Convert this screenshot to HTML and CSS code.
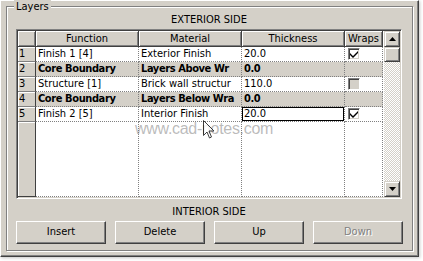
FILE: index.html
```html
<!DOCTYPE html>
<html>
<head>
<meta charset="utf-8">
<link rel="stylesheet" href="styles.css">
</head>
<body>
<div class="dialog">
  <div class="group">
    <div class="legend">Layers</div>
    <div class="side">EXTERIOR SIDE</div>
    <div class="grid">
      <div class="table">
        <div class="hc"></div>
        <div class="hc">Function</div>
        <div class="hc">Material</div>
        <div class="hc">Thickness</div>
        <div class="hc">Wraps</div>

        <div class="rh">1</div>
        <div class="c">Finish 1 [4]</div>
        <div class="c">Exterior Finish</div>
        <div class="c">20.0</div>
        <div class="c"><span class="cb"><svg width="8" height="7" viewBox="0 0 8 7"><path d="M0 2v2l3 3 5-5V0L3 5z" fill="#000"/></svg></span></div>

        <div class="rh">2</div>
        <div class="c g b">Core Boundary</div>
        <div class="c g b">Layers Above Wr</div>
        <div class="c g b">0.0</div>
        <div class="c g"></div>

        <div class="rh">3</div>
        <div class="c">Structure [1]</div>
        <div class="c">Brick wall structur</div>
        <div class="c">110.0</div>
        <div class="c"><span class="cb dis"></span></div>

        <div class="rh">4</div>
        <div class="c g b">Core Boundary</div>
        <div class="c g b">Layers Below Wra</div>
        <div class="c g b">0.0</div>
        <div class="c g"></div>

        <div class="rh">5</div>
        <div class="c">Finish 2 [5]</div>
        <div class="c">Interior Finish</div>
        <div class="c sel">20.0</div>
        <div class="c"><span class="cb"><svg width="8" height="7" viewBox="0 0 8 7"><path d="M0 2v2l3 3 5-5V0L3 5z" fill="#000"/></svg></span></div>

        <div class="rh fill"></div>
        <div class="c fill"></div>
        <div class="c fill"></div>
        <div class="c fill"></div>
        <div class="c fill"></div>
      </div>
      <div class="vscroll">
        <div class="sbtn"><svg width="7" height="4" viewBox="0 0 7 4"><path d="M3.5 0L7 4H0z" fill="#000"/></svg></div>
        <div class="thumb"></div>
        <div class="track"></div>
        <div class="sbtn"><svg width="7" height="4" viewBox="0 0 7 4"><path d="M0 0h7L3.5 4z" fill="#000"/></svg></div>
      </div>
      <div class="watermark">www.cad-notes.com</div>
      <svg class="cursor" width="12" height="20" viewBox="0 0 12 20"><path d="M0.5 0.5v15l3.5-3.5 2.5 6 2-1-2.5-6h5z" fill="#fff" stroke="#000" stroke-width="1"/></svg>
    </div>
    <div class="side side-int">INTERIOR SIDE</div>
    <div class="buttons">
      <div class="btn">Insert</div>
      <div class="btn">Delete</div>
      <div class="btn">Up</div>
      <div class="btn disabled">Down</div>
    </div>
  </div>
</div>
</body>
</html>
```

FILE: styles.css
```css
html, body {
  margin: 0;
  padding: 0;
}
body {
  width: 423px;
  height: 261px;
  background: #fff;
  font-family: "DejaVu Sans Condensed", "DejaVu Sans", sans-serif;
  font-size: 11px;
  color: #000;
  overflow: hidden;
}
.dialog {
  width: 419px;
  height: 257px;
  padding: 5px 0 0 5px;
  box-sizing: border-box;
  background: #d4d0c8;
  border-style: solid;
  border-width: 1px;
  border-color: #fff #404040 #404040 #fff;
  box-shadow: inset -1px -1px 0 #808080, 1px 1px 3px rgba(0, 0, 0, 0.22);
}
.group {
  position: relative;
  width: 407px;
  height: 245px;
  box-sizing: border-box;
  border: 1px solid #808080;
  box-shadow: inset 1px 1px 0 #fff, 1px 1px 0 #fff;
  padding: 6px 0 0 9px;
}
.legend {
  position: absolute;
  left: 7px;
  top: -7px;
  padding: 0 2px;
  background: #d4d0c8;
  line-height: 13px;
}
.side {
  width: 386px;
  text-align: center;
  line-height: 13px;
  height: 13px;
}
.side-int {
  margin-top: 6px;
}
.grid {
  position: relative;
  margin-top: 3px;
  width: 386px;
  height: 170px;
  box-sizing: border-box;
  border-style: solid;
  border-width: 1px;
  border-color: #808080 #fff #fff #808080;
  box-shadow: inset 1px 1px 0 #404040, inset -1px -1px 0 #d4d0c8;
  padding: 1px;
  display: flex;
  background: #fff;
}
.table {
  flex: 1;
  display: grid;
  grid-template-columns: 18px 103px 103px 103px 38px;
  grid-template-rows: 16px repeat(5, 15px) 1fr;
  overflow: hidden;
}
.hc {
  background: #d4d0c8;
  box-sizing: border-box;
  border-right: 1px solid #404040;
  border-bottom: 1px solid #404040;
  box-shadow: inset 1px 1px 0 #fff, inset -1px -1px 0 #808080;
  text-align: center;
  line-height: 15px;
  white-space: nowrap;
  overflow: hidden;
}
.rh {
  background: #d4d0c8;
  box-sizing: border-box;
  border-right: 1px solid #404040;
  border-bottom: 1px solid #808080;
  box-shadow: inset 1px 1px 0 #fff;
  padding-left: 1px;
  line-height: 14px;
}
.rh.fill {
  border-bottom: 1px solid #404040;
}
.c {
  box-sizing: border-box;
  border-right: 1px dotted #808080;
  border-bottom: 1px dotted #808080;
  padding-left: 2px;
  line-height: 14px;
  white-space: nowrap;
  overflow: hidden;
}
.c.g {
  background: #d4d0c8;
}
.c.b {
  font-weight: bold;
  letter-spacing: -0.4px;
}
.c.sel {
  box-shadow: inset 0 0 0 1px #000;
}
.cb {
  display: inline-block;
  width: 12px;
  height: 12px;
  box-sizing: border-box;
  margin: 1px 0 0 1px;
  border-style: solid;
  border-width: 1px;
  border-color: #808080 #fff #fff #808080;
  box-shadow: inset 1px 1px 0 #404040, inset -1px -1px 0 #d4d0c8;
  background: #fff;
  vertical-align: top;
  position: relative;
}
.cb svg {
  position: absolute;
  left: 1px;
  top: 2px;
}
.cb.dis {
  background: #d4d0c8;
}
.vscroll {
  width: 16px;
  display: flex;
  flex-direction: column;
}
.sbtn, .thumb {
  background: #d4d0c8;
  box-sizing: border-box;
  border-style: solid;
  border-width: 1px;
  border-color: #d4d0c8 #404040 #404040 #d4d0c8;
  box-shadow: inset 1px 1px 0 #fff, inset -1px -1px 0 #808080;
}
.sbtn {
  height: 16px;
  display: flex;
  align-items: center;
  justify-content: center;
}
.thumb {
  height: 15px;
}
.track {
  flex: 1;
  background: conic-gradient(#d4d0c8 25%, #fff 0 50%, #d4d0c8 0 75%, #fff 0) 0 0 / 2px 2px;
}
.watermark {
  position: absolute;
  left: 118px;
  top: 90px;
  font-family: "Liberation Sans", sans-serif;
  font-size: 16px;
  color: rgba(120, 120, 120, 0.5);
  letter-spacing: -0.3px;
  pointer-events: none;
}
.cursor {
  position: absolute;
  left: 186px;
  top: 90px;
  opacity: 0.75;
}
.buttons {
  margin-top: 3px;
  display: flex;
  gap: 9px;
}
.btn {
  width: 90px;
  height: 23px;
  box-sizing: border-box;
  background: #d4d0c8;
  border-style: solid;
  border-width: 1px;
  border-color: #fff #404040 #404040 #fff;
  box-shadow: inset -1px -1px 0 #808080;
  text-align: center;
  line-height: 20px;
}
.btn.disabled {
  color: #808080;
  text-shadow: 1px 1px 0 #fff;
}
```
